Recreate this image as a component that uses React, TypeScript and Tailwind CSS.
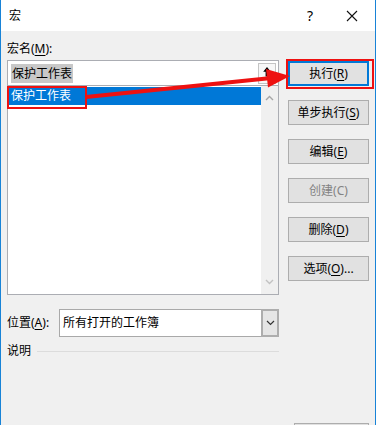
import React from "react";

const font = { fontFamily: '"Noto Sans", "Noto Sans CJK SC", sans-serif' };

function Btn({ children, disabled, primary }: { children: React.ReactNode; disabled?: boolean; primary?: boolean }) {
  return (
    <div
      className={
        "h-[25px] w-[81px] flex items-center justify-center text-[12px] bg-[#e1e1e1] " +
        (primary ? "border-2 border-[#0078d7] " : "border border-[#adadad] ") +
        (disabled ? "text-[#838383]" : "text-black")
      }
    >
      {children}
    </div>
  );
}

function U({ c }: { c: string }) {
  return <span className="underline underline-offset-2">{c}</span>;
}

export default function App() {
  return (
    <div
      className="relative w-[376px] h-[425px] overflow-hidden bg-[#f0f0f0] border-x border-[#1883d7] text-black"
      style={font}
    >
      {/* Title bar */}
      <div className="h-[31px] bg-white flex items-center text-[12px]">
        <span className="ml-[8px]">宏</span>
        <span className="ml-auto mr-[33px] text-[14px]">?</span>
        <svg width="12" height="12" viewBox="0 0 12 12" className="mr-[17px]">
          <path d="M1 1 L11 11 M11 1 L1 11" stroke="#111" strokeWidth="1.1" />
        </svg>
      </div>

      {/* Body */}
      <div className="flex pl-[6px] pt-[9px]">
        {/* Left column */}
        <div className="w-[272px] flex flex-col">
          <div className="h-[17px] leading-[17px] text-[12px]">
            宏名(<U c="M" />):
          </div>
          {/* Input */}
          <div className="mt-[3px] h-[26px] bg-white border border-[#abadb3] flex items-center pl-[3px] pr-[2px]">
            <span className="bg-[#c8c8c8] text-[12px] leading-[19px] px-[1px]">保护工作表</span>
            <div className="ml-auto w-[18px] h-[21px] border border-[#c4c4c4] bg-[#f7f7f7] flex items-center justify-center">
              <svg width="10" height="14" viewBox="0 0 10 14">
                <path d="M5 1 L1.2 5.8 H3.6 V10.5 H6.4 V5.8 H8.8 Z" fill="#000" />
                <rect x="2" y="12" width="6" height="1.3" fill="#000" />
              </svg>
            </div>
          </div>
          {/* List */}
          <div className="h-[209px] bg-white border border-t-0 border-[#abadb3] flex">
            <div className="flex-1 pt-[1px]">
              <div className="h-[18px] bg-[#0078d7] text-white text-[12px] leading-[18px] pl-[3px]">保护工作表</div>
            </div>
            <div className="w-[17px] bg-[#f0f0f0] flex flex-col items-center justify-between py-[9px]">
              <svg width="9" height="6" viewBox="0 0 9 6">
                <path d="M1 5 L4.5 1.5 L8 5" stroke="#a6a6a6" strokeWidth="1.4" fill="none" />
              </svg>
              <svg width="9" height="6" viewBox="0 0 9 6">
                <path d="M1 1 L4.5 4.5 L8 1" stroke="#c2c2c2" strokeWidth="1.4" fill="none" />
              </svg>
            </div>
          </div>
          {/* Location */}
          <div className="mt-[14px] flex items-center h-[28px]">
            <span className="w-[52px] text-[12px]">
              位置(<U c="A" />):
            </span>
            <div className="flex-1 h-[28px] bg-white border border-[#a9a9a9] flex items-center">
              <span className="pl-[3px] text-[12px]">所有打开的工作簿</span>
              <div className="ml-auto w-[18px] h-[28px] -mr-[1px] bg-[#e5e5e5] border-2 border-[#adadad] flex items-center justify-center">
                <svg width="9" height="6" viewBox="0 0 9 6">
                  <path d="M1 1 L4.5 4.5 L8 1" stroke="#333" strokeWidth="1.2" fill="none" />
                </svg>
              </div>
            </div>
          </div>
          {/* Description */}
          <div className="mt-[5px] flex items-center h-[18px]">
            <span className="text-[12px]">说明</span>
            <div className="flex-1 ml-[6px] h-px bg-[#dcdcdc]" />
          </div>
        </div>

        {/* Right column */}
        <div className="ml-[9px] mt-[21px] flex flex-col gap-[14px]">
          <Btn primary>
            执行(<U c="R" />)
          </Btn>
          <Btn>
            单步执行(<U c="S" />)
          </Btn>
          <Btn>
            编辑(<U c="E" />)
          </Btn>
          <Btn disabled>创建(C)</Btn>
          <Btn>
            删除(<U c="D" />)
          </Btn>
          <Btn>
            选项(<U c="O" />)...
          </Btn>
        </div>
      </div>

      {/* Bottom button peeking */}
      <div className="absolute left-[293px] top-[423px] w-[75px] h-[20px] border border-[#adadad] bg-[#e1e1e1]" />

      {/* Annotations */}
      <div className="absolute left-[6px] top-[86px] w-[80px] h-[23px] border-2 border-[#ee1111]" />
      <div className="absolute left-[285px] top-[59px] w-[88px] h-[30px] border-2 border-[#ee1111]" />
      <svg className="absolute left-0 top-0 pointer-events-none" width="376" height="425">
        <line x1="85" y1="97" x2="268" y2="78.2" stroke="#ee1111" strokeWidth="4" />
        <polygon points="289,76 267,87.5 265,69" fill="#ee1111" />
      </svg>
    </div>
  );
}
